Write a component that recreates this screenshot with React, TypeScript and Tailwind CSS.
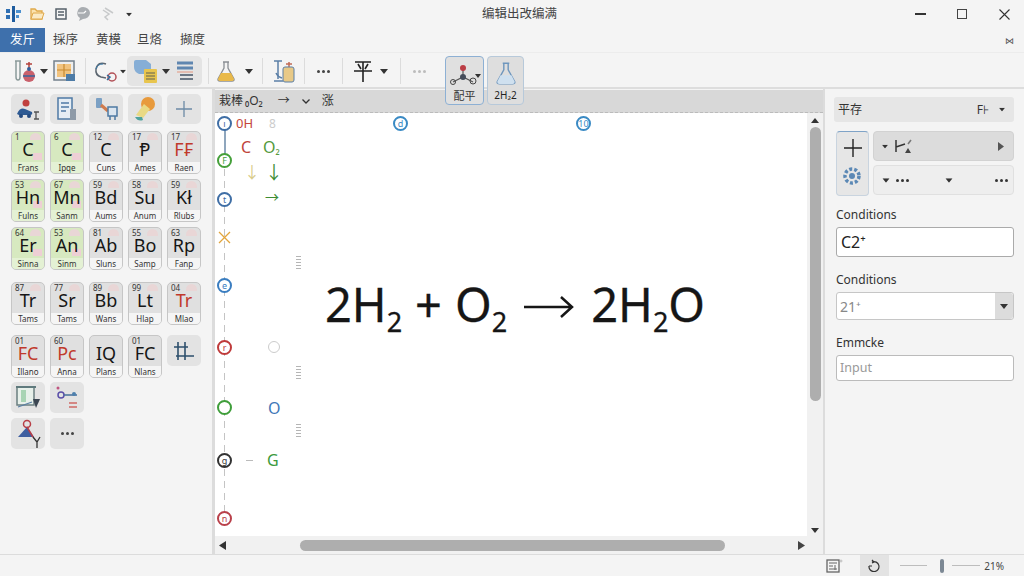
import React from "react";

const Caret = ({ c = "" }: { c?: string }) => (
  <svg width="8" height="5" viewBox="0 0 8 5" className={c}><path d="M0 0h8L4 5z" fill="#333" /></svg>
);
const Dots = ({ c = "bg-[#444]" }: { c?: string }) => (
  <span className="flex gap-[2px]">
    <i className={`block w-[3px] h-[3px] rounded-full ${c}`} />
    <i className={`block w-[3px] h-[3px] rounded-full ${c}`} />
    <i className={`block w-[3px] h-[3px] rounded-full ${c}`} />
  </span>
);
const Sep = ({ c = "" }: { c?: string }) => <span className={`block w-px h-[26px] bg-[#dcdcdc] ${c}`} />;

const Flask = ({ fill = "#e9b949", stroke = "#8a8f94", s = 22 }: { fill?: string; stroke?: string; s?: number }) => (
  <svg width={s} height={s} viewBox="0 0 22 22">
    <path d="M8 2h6M9 2v6L3 19q-.5 2 2 2h12q2.500 0 2-2L13 8V2" fill="none" stroke={stroke} strokeWidth="1.300" />
    <path d="M6 13h10l3 6q0 2-2 2H5q-2 0-2-2z" fill={fill} />
  </svg>
);

const TestTubes = () => (
  <svg width="24" height="24" viewBox="0 0 24 24">
    <path d="M2 2h6M3 2v16q0 3 2 3t2-3V2" fill="none" stroke="#8b9a9a" strokeWidth="1.500" />
    <path d="M16 3v8" stroke="#b3423d" strokeWidth="1.500" />
    <path d="M13 5h6" stroke="#b3423d" strokeWidth="1.500" />
    <circle cx="16" cy="17" r="6" fill="#c9606b" />
    <path d="M10 17h12" stroke="#35659b" strokeWidth="1.500" />
    <circle cx="16" cy="10" r="2" fill="#34609a" />
  </svg>
);
const Board = () => (
  <svg width="23" height="22" viewBox="0 0 23 22">
    <rect x="1" y="1" width="20" height="19" fill="#eee" stroke="#73808c" strokeWidth="1.500" />
    <rect x="4" y="4" width="14" height="13" fill="#f1c37f" />
    <path d="M11 4v13M4 10h14" stroke="#c98a2f" strokeWidth="1.200" />
    <rect x="13" y="14" width="9" height="7" fill="#4d7ba6" />
  </svg>
);
const Loop = () => (
  <svg width="24" height="22" viewBox="0 0 24 22">
    <path d="M12 4Q4 1 2 9q-1 6 5 8l5 1" fill="none" stroke="#5c6670" strokeWidth="1.500" />
    <path d="M2 9q1-5 7-5" fill="none" stroke="#3c7cab" strokeWidth="1" />
    <circle cx="18" cy="17" r="4" fill="none" stroke="#b25158" strokeWidth="1.500" />
    <path d="M13 15l3 2-3 3" fill="none" stroke="#2f6b9c" strokeWidth="1.500" />
  </svg>
);
const Folders = () => (
  <svg width="26" height="26" viewBox="0 0 26 26">
    <path d="M1 4q0-2 2-2h10l5 4v10H6Q1 14 1 9z" fill="#86aed6" />
    <rect x="11" y="11" width="13" height="14" rx="1" fill="#e8c54e" />
    <path d="M13 15h9M13 18h9M13 21h9" stroke="#8d8351" strokeWidth="1.300" />
  </svg>
);
const Rows = () => (
  <svg width="17" height="20" viewBox="0 0 17 20">
    <path d="M0 2h16M0 7h16" stroke="#5f86b0" strokeWidth="3" />
    <path d="M0 11h16" stroke="#e5b0a0" strokeWidth="1.500" />
    <path d="M3 14h13M3 18h13" stroke="#6d7885" strokeWidth="2" />
  </svg>
);
const TubeBottle = () => (
  <svg width="21" height="24" viewBox="0 0 21 24">
    <path d="M0 2h8M4 2v18M0 22h9" stroke="#5b7fa6" strokeWidth="1.500" fill="none" />
    <path d="M2 14q2 4 6 5" stroke="#5b7fa6" strokeWidth="1.500" fill="none" />
    <path d="M15 3v5M12 5h6" stroke="#c16b55" strokeWidth="1.500" />
    <rect x="9" y="8" width="11" height="15" rx="2" fill="#e8c987" stroke="#5b7fa6" />
  </svg>
);
const Balance = () => (
  <svg width="20" height="23" viewBox="0 0 20 23">
    <path d="M2 2h16M5 4l3 5M15 4l-3 5M1 11h18M10 2v20" stroke="#222" strokeWidth="1.600" fill="none" />
  </svg>
);
const Molecule = () => (
  <svg width="32" height="24" viewBox="0 0 32 24">
    <path d="M4 19l10-5 10 5M14 4v10" stroke="#555" strokeWidth="1.200" fill="none" />
    <circle cx="14" cy="5" r="3" fill="#bb3d45" />
    <circle cx="14" cy="14" r="3" fill="#444c5a" />
    <circle cx="4" cy="19" r="2.500" fill="none" stroke="#444" />
    <circle cx="24" cy="18" r="3" fill="none" stroke="#444" />
    <path d="M26 11h6l-3 4z" fill="#333" />
  </svg>
);
const PersonKit = () => (
  <svg width="24" height="22" viewBox="0 0 24 22">
    <circle cx="10" cy="5" r="3.500" fill="#c0413f" />
    <path d="M1 16q3-7 8-5l7 3q1 3-2 3H3z" fill="#2e5a93" />
    <circle cx="5" cy="18" r="2" fill="#244a80" />
    <circle cx="13" cy="18" r="2" fill="#244a80" />
    <path d="M18 14h5M18 21h5M20 14v7" stroke="#555" strokeWidth="1.300" />
  </svg>
);
const DocKit = () => (
  <svg width="20" height="24" viewBox="0 0 20 24">
    <rect x="1" y="1" width="14" height="21" fill="#e5edf4" stroke="#4f7aa5" strokeWidth="1.500" />
    <path d="M4 6h8M4 10h8M4 14h5" stroke="#4f7aa5" strokeWidth="1.500" />
    <rect x="13" y="12" width="6" height="11" fill="#8e9aa7" />
  </svg>
);
const TubesKit = () => (
  <svg width="23" height="24" viewBox="0 0 23 24">
    <rect x="1" y="1" width="6" height="10" rx="1" fill="#7ba0c4" />
    <path d="M6 8l7 6" stroke="#d07b4d" strokeWidth="3" />
    <rect x="13" y="10" width="9" height="9" fill="#dbe5ef" stroke="#4e79a3" strokeWidth="1.500" />
    <path d="M15 19v4M20 19v4" stroke="#4e79a3" strokeWidth="1.500" />
  </svg>
);
const Brush = () => (
  <svg width="22" height="26" viewBox="0 0 22 26">
    <circle cx="14" cy="8" r="7" fill="#e89a3c" />
    <path d="M2 19l8-11 6 5-7 9z" fill="#e9d984" />
    <path d="M1 21q3 5 8 3l-1-3z" fill="#4fa39e" />
  </svg>
);
const Frame = () => (
  <svg width="27" height="26" viewBox="0 0 27 26">
    <rect x="2" y="2" width="17" height="18" fill="#e7f0ea" stroke="#6b7f80" strokeWidth="1.500" />
    <rect x="6" y="5" width="5" height="12" fill="#a8d4b4" />
    <path d="M1 2h20" stroke="#5f7a7d" strokeWidth="2" />
    <path d="M3 22l14-5" stroke="#5a7fa3" strokeWidth="1.300" />
    <path d="M18 14h7l-4 9z" fill="#3b4652" />
  </svg>
);
const KeyEq = () => (
  <svg width="24" height="24" viewBox="0 0 24 24">
    <circle cx="3" cy="2" r="1.500" fill="#c05680" />
    <circle cx="6" cy="9" r="3" fill="none" stroke="#5a4fa8" strokeWidth="1.500" />
    <path d="M9 9h13" stroke="#466f9a" strokeWidth="1.500" />
    <circle cx="19" cy="8" r="2" fill="#4d80ad" />
    <path d="M14 17h8M14 21h8" stroke="#cf6a66" strokeWidth="1.500" />
  </svg>
);
const PersonY = () => (
  <svg width="26" height="30" viewBox="0 0 26 30">
    <circle cx="12" cy="5" r="3.500" fill="none" stroke="#b83e46" strokeWidth="1.500" />
    <path d="M12 8L3 18h16z" fill="#3f5fa0" />
    <path d="M12 8l6 10" stroke="#b83e46" strokeWidth="1.500" />
    <path d="M18 18l4 5 3-5M22 23v6" fill="none" stroke="#333" strokeWidth="1.300" />
  </svg>
);

type Card = { n: string; s: string; l: string; green?: boolean; red?: boolean; plain?: boolean };
const rows: Card[][] = [
  [
    { n: "1", s: "C", l: "Frans", green: true },
    { n: "6", s: "C", l: "Ipqe", green: true },
    { n: "12", s: "C", l: "Cuns" },
    { n: "17", s: "Ᵽ", l: "Ames" },
    { n: "17", s: "F₣", l: "Raen", red: true },
  ],
  [
    { n: "53", s: "Hn", l: "Fulns", green: true },
    { n: "67", s: "Mn", l: "Sanm", green: true },
    { n: "59", s: "Bd", l: "Aums" },
    { n: "58", s: "Su", l: "Anum" },
    { n: "59", s: "Kł", l: "Rlubs" },
  ],
  [
    { n: "64", s: "Er", l: "Sinna", green: true },
    { n: "53", s: "An", l: "Sinm", green: true },
    { n: "81", s: "Ab", l: "Sluns" },
    { n: "55", s: "Bo", l: "Samp" },
    { n: "63", s: "Rp", l: "Fanp" },
  ],
];
const row4: Card[] = [
  { n: "87", s: "Tr", l: "Tams" },
  { n: "77", s: "Sr", l: "Tams" },
  { n: "89", s: "Bb", l: "Wans" },
  { n: "99", s: "Lt", l: "Hlap" },
  { n: "04", s: "Tr", l: "Mlao", red: true },
];
const row5: Card[] = [
  { n: "01", s: "FC", l: "Illano", red: true, plain: true },
  { n: "60", s: "Pc", l: "Anna", red: true, plain: true },
  { n: "", s: "IQ", l: "Plans", plain: true },
  { n: "01", s: "FC", l: "Nlans", plain: true },
];

const ElementCard = ({ c }: { c: Card }) => (
  <div
    className={`relative h-[43px] rounded-[5px] border border-[#c6c6c6] overflow-hidden flex flex-col ${
      c.green ? "bg-[#d7e9c0]" : "bg-[#e0e0e0]"
    }`}
  >
    {!c.plain && <span className="absolute right-[3px] top-px w-[11px] h-[7px] rounded-t-full bg-[#e9d6d6]" />}
    {c.green && <span className="absolute right-[2px] top-[21px] w-[9px] h-[7px] bg-[#eecfd5]" />}
    <span className="absolute left-[3px] top-px text-[8px] leading-[8px] text-[#333]">{c.n}</span>
    <span
      className={`relative h-[30px] pt-[9px] flex items-start justify-center text-[18px] leading-[16px] ${
        c.red ? "text-[#c0392b]" : "text-[#161616]"
      }`}
    >
      {c.s}
    </span>
    <span
      className={`h-[11px] flex items-center justify-center text-[8px] leading-none text-[#333] ${
        c.green ? "bg-[#e4f1d4]" : "bg-[#f5f5f5]"
      }`}
    >
      {c.l}
    </span>
  </div>
);
const Tile = ({ children, h = "h-[30px]" }: { children?: React.ReactNode; h?: string }) => (
  <div className={`${h} rounded-[5px] bg-[#e3e3e3] flex items-center justify-center`}>{children}</div>
);
const grid = "grid grid-cols-[repeat(5,34px)] gap-x-[5px]";

const Ring = ({ pos, color, t }: { pos: string; color: string; t: string }) => (
  <span
    className={`absolute ${pos} w-[15px] h-[15px] rounded-full border-2 bg-white flex items-center justify-center text-[9px] leading-none ${color}`}
  >
    {t}
  </span>
);
const Ticks = ({ pos }: { pos: string }) => (
  <span className={`absolute ${pos} w-[5px] h-[14px] bg-[repeating-linear-gradient(#b5b5b5_0_1px,transparent_1px_3px)]`} />
);
const Label = ({ pos, c, t, size = "text-[16px]" }: { pos: string; c: string; t: React.ReactNode; size?: string }) => (
  <span className={`absolute ${pos} ${c} ${size} leading-none`}>{t}</span>
);

export default function App() {
  return (
    <div className="w-[1024px] h-[576px] overflow-hidden flex flex-col bg-[#f4f4f4] text-[#333] font-['Noto_Sans','Noto_Sans_CJK_SC',sans-serif]">
      {/* title bar */}
      <div className="h-[28px] shrink-0 relative flex items-center pl-[6px]">
        <svg width="16" height="16" viewBox="0 0 16 16">
          <path d="M0 3h4v4H0zM0 9h4v4H0z" fill="#2f6fb3" />
          <path d="M6 0h3v16H6z" fill="#1f5c9e" />
          <path d="M10 4h5v3h-5zM10 9h3v3h-3z" fill="#4d91cf" />
        </svg>
        <svg className="ml-[8px]" width="15" height="14" viewBox="0 0 15 14">
          <path d="M1 12V2h4l2 2h5v8z" fill="#fbe3ae" stroke="#e0a94a" strokeWidth="1.300" />
          <path d="M3 6h11l-2 6H1z" fill="#fbeac4" stroke="#e0a94a" />
        </svg>
        <svg className="ml-[10px]" width="12" height="12" viewBox="0 0 12 12">
          <rect x="1" y="1" width="10" height="10" fill="none" stroke="#56606a" strokeWidth="1.500" />
          <path d="M3 4h6M3 7h6" stroke="#56606a" strokeWidth="1.300" />
        </svg>
        <svg className="ml-[9px]" width="15" height="14" viewBox="0 0 15 14">
          <path d="M7 0a7 6 0 110 12l-4 2 1-3A6 6 0 017 0z" fill="#a9adb1" />
          <path d="M2 6h6l2-2" stroke="#fff" strokeWidth="1.200" fill="none" />
        </svg>
        <svg className="ml-[11px]" width="12" height="14" viewBox="0 0 12 14">
          <path d="M1 3l6 4-4 3 3 3M3 1l8 5" stroke="#c7c9ca" strokeWidth="1.500" fill="none" />
        </svg>
        <Caret c="ml-[11px] scale-75" />
        <span className="absolute left-[482px] top-[5px] text-[12.500px] leading-[18px] text-[#444]">编辑出改编满</span>
        <div className="ml-auto flex items-center">
          <span className="block w-[11px] h-[1.500px] bg-[#333] mr-[31px]" />
          <span className="block w-[10px] h-[10px] border border-[#444] mr-[32px]" />
          <svg className="mr-[14px]" width="11" height="11" viewBox="0 0 11 11">
            <path d="M.500.500l10 10M10.500.500l-10 10" stroke="#333" strokeWidth="1.100" />
          </svg>
        </div>
      </div>
      {/* menu tabs */}
      <div className="h-[24px] shrink-0 flex items-center text-[12.500px] leading-none text-[#444]">
        <span className="w-[45px] h-[24px] bg-[#3e70ac] text-white flex items-center justify-center">发斤</span>
        <span className="ml-[8px]">採序</span>
        <span className="ml-[18px]">黄模</span>
        <span className="ml-[16px]">旦烙</span>
        <span className="ml-[18px]">撷度</span>
        <span className="ml-auto mr-[10px] text-[9px] text-[#555]">⋈</span>
      </div>
      {/* toolbar */}
      <div className="h-[37px] shrink-0 flex items-start pt-[3px] border-t border-[#ececec] border-b-2 border-b-[#dddddd] relative z-10">
        <div className="ml-[13px] h-[30px] flex items-center">
          <TestTubes />
          <Caret c="ml-[3px]" />
          <span className="ml-[5px]"><Board /></span>
          <Sep c="ml-[9px]" />
          <span className="ml-[8px]"><Loop /></span>
          <Caret c="ml-[1px] scale-75" />
        </div>
        <div className="h-[30px] w-[75px] rounded-[5px] bg-[#e4e4e4] flex items-center pl-[6px]">
          <Folders />
          <Caret c="ml-[3px]" />
          <span className="ml-[7px]"><Rows /></span>
        </div>
        <div className="h-[30px] flex items-center">
          <Sep c="ml-[6px]" />
          <span className="ml-[6px]"><Flask /></span>
          <Caret c="ml-[8px]" />
          <Sep c="ml-[9px]" />
          <span className="ml-[11px]"><TubeBottle /></span>
          <Sep c="ml-[9px]" />
          <span className="ml-[12px]"><Dots /></span>
          <Sep c="ml-[12px]" />
          <span className="ml-[10px]"><Balance /></span>
          <Caret c="ml-[7px]" />
          <Sep c="ml-[12px]" />
          <span className="ml-[12px]"><Dots c="bg-[#bcbcbc]" /></span>
        </div>
        <div className="ml-[19px] w-[39px] h-[49px] rounded-[4px] border border-[#8db0d4] bg-[#e0e0e0] flex flex-col items-center pt-[6px]">
          <Molecule />
          <span className="text-[11px] leading-[14px] mt-[2px] text-[#333]">配平</span>
        </div>
        <div className="ml-[3px] w-[37px] h-[49px] rounded-[4px] border border-[#b7c9da] bg-[#dedede] flex flex-col items-center pt-[4px]">
          <Flask fill="#cfe0ef" stroke="#6e96bd" s={24} />
          <span className="text-[10px] leading-[14px] mt-[3px] text-[#222]">2H₂2</span>
        </div>
      </div>

      {/* body */}
      <div className="flex-1 min-h-0 flex">
        {/* palette */}
        <div className="w-[212px] shrink-0 pl-[11px] pt-[5px] flex flex-col">
          <div className={grid}>
            <Tile><PersonKit /></Tile>
            <Tile><DocKit /></Tile>
            <Tile><TubesKit /></Tile>
            <Tile><Brush /></Tile>
            <Tile>
              <svg width="16" height="16" viewBox="0 0 16 16"><path d="M8 0v16M0 8h16" stroke="#6d8ba6" strokeWidth="1.300" /></svg>
            </Tile>
          </div>
          <div className={`${grid} gap-y-[5px] mt-[7px]`}>
            {rows.flat().map((c, i) => (
              <ElementCard key={i} c={c} />
            ))}
          </div>
          <div className={`${grid} mt-[12px]`}>
            {row4.map((c, i) => (
              <ElementCard key={i} c={c} />
            ))}
          </div>
          <div className={`${grid} mt-[10px] items-start`}>
            {row5.map((c, i) => (
              <ElementCard key={i} c={c} />
            ))}
            <Tile h="h-[31px]">
              <svg width="20" height="20" viewBox="0 0 20 20">
                <path d="M4 1v18M11 1v18M0 6h14M2 15h18" stroke="#2d4f6c" strokeWidth="1.600" />
              </svg>
            </Tile>
          </div>
          <div className={`${grid} mt-[4px] gap-y-[5px]`}>
            <Tile h="h-[31px]"><Frame /></Tile>
            <Tile h="h-[31px]"><KeyEq /></Tile>
            <span /><span /><span />
            <Tile h="h-[31px]"><PersonY /></Tile>
            <Tile h="h-[31px]"><Dots /></Tile>
          </div>
        </div>

        {/* canvas column */}
        <div className="w-[613px] shrink-0 flex flex-col border-l-[3px] border-l-[#dcdcdc] border-r-2 border-r-[#dcdcdc]">
          <div className="h-[23px] shrink-0 mt-[1px] bg-[#d8d8d8] flex items-center text-[12px] leading-none text-[#333] pl-[4px] border-b border-dashed border-b-[#bbbbbb]">
            <span>栽棒</span>
            <span className="ml-[2px] text-[12px]">₀O₂</span>
            <span className="ml-[15px]">→</span>
            <svg className="ml-[12px]" width="8" height="5" viewBox="0 0 8 5"><path d="M.500.500L4 4 7.500.500" fill="none" stroke="#333" strokeWidth="1.300" /></svg>
            <span className="ml-[12px]">涨</span>
          </div>
          <div className="flex-1 min-h-0 flex">
            <div className="flex-1 min-w-0 flex flex-col">
              {/* free canvas */}
              <div className="relative flex-1 min-h-0 bg-white flex items-center justify-center overflow-hidden">
                <span className="absolute left-[9px] top-[8px] bottom-[18px] w-px bg-[repeating-linear-gradient(#c4c4c4_0_7px,transparent_7px_12px)]" />
                <span className="absolute left-[9px] top-[12px] h-[36px] w-[2px] bg-[#8fa6bd]" />
                <Ring pos="left-[2px] top-[3px]" color="border-[#3f6ea5] text-[#3f6ea5]" t="ı" />
                <Ring pos="left-[2px] top-[40px]" color="border-[#45a03a] text-[#45a03a]" t="F" />
                <Ring pos="left-[2px] top-[79px]" color="border-[#3f6ea5] text-[#3f6ea5]" t="t" />
                <svg className="absolute left-[3px] top-[118px]" width="13" height="13" viewBox="0 0 13 13">
                  <path d="M1 1l11 11M12 1L1 12" stroke="#e2a53c" strokeWidth="1.300" />
                </svg>
                <Ring pos="left-[2px] top-[165px]" color="border-[#3a7dc0] text-[#3a7dc0]" t="e" />
                <Ring pos="left-[2px] top-[227px]" color="border-[#bf3a3a] text-[#bf3a3a]" t="r" />
                <Ring pos="left-[2px] top-[287px]" color="border-[#3f9e3a] text-[#3f9e3a]" t="" />
                <Ring pos="left-[2px] top-[340px]" color="border-[#333] text-[#333]" t="g" />
                <Ring pos="left-[2px] top-[398px]" color="border-[#b9404a] text-[#b9404a]" t="n" />
                <Ring pos="left-[178px] top-[3px]" color="border-[#3a8ac4] text-[#3a8ac4]" t="d" />
                <Ring pos="left-[361px] top-[3px]" color="border-[#3a8ac4] text-[#3a8ac4]" t="10" />
                <Label pos="left-[21px] top-[4px]" c="text-[#c4473c]" t="0H" size="text-[13px]" />
                <Label pos="left-[54px] top-[5px]" c="text-[#cccccc]" t="8" size="text-[12px]" />
                <Label pos="left-[26px] top-[26px]" c="text-[#c0443c]" t="C" />
                <Label pos="left-[48px] top-[26px]" c="text-[#549a3c]" t={<>O<span className="text-[12px]">₂</span></>} />
                <Label pos="left-[29px] top-[51px]" c="text-[#d9cc8a]" t="↓" />
                <Label pos="left-[50px] top-[50px]" c="text-[#3d8c33]" t="↓" size="text-[18px]" />
                <Label pos="left-[50px] top-[77px]" c="text-[#3d8c33]" t="→" size="text-[14px]" />
                <Ticks pos="left-[81px] top-[143px]" />
                <Ticks pos="left-[81px] top-[253px]" />
                <Ticks pos="left-[81px] top-[311px]" />
                <span className="absolute left-[53px] top-[228px] w-[12px] h-[12px] rounded-full border-[1.500px] border-[#cccccc]" />
                <Label pos="left-[53px] top-[287px]" c="text-[#3f78b8]" t="O" />
                <Label pos="left-[52px] top-[339px]" c="text-[#3c9a3c]" t="G" />
                <span className="absolute left-[31px] top-[347px] w-[7px] h-px bg-[#bbbbbb]" />
                <div className="relative top-[-20px] left-[4px] text-[47px] leading-none text-[#161616] [-webkit-text-stroke:0.3px_#161616] whitespace-nowrap flex items-baseline">
                  2H<span className="text-[27px] leading-none relative top-[10px]">2</span>
                  <span className="ml-[13px]">+</span>
                  <span className="ml-[13px]">O</span><span className="text-[27px] leading-none relative top-[10px]">2</span>
                  <svg className="mx-[17px] self-center relative top-[2px]" width="50" height="24" viewBox="0 0 50 24">
                    <path d="M0 12h48M37 2l11 10-11 10" fill="none" stroke="#161616" strokeWidth="2.500" />
                  </svg>
                  2H<span className="text-[27px] leading-none relative top-[10px]">2</span>O
                </div>
              </div>
              {/* horizontal scrollbar */}
              <div className="h-[18px] shrink-0 bg-[#f1f1f1] flex items-center pl-[4px] pr-[2px]">
                <svg width="7" height="9" viewBox="0 0 7 9"><path d="M7 0v9L0 4.500z" fill="#333" /></svg>
                <span className="ml-[74px] w-[425px] h-[11px] rounded-full bg-[#aeaeae]" />
                <svg className="ml-auto" width="7" height="9" viewBox="0 0 7 9"><path d="M0 0v9l7-4.500z" fill="#444" /></svg>
              </div>
            </div>
            {/* vertical scrollbar */}
            <div className="w-[16px] shrink-0 bg-[#f1f1f1] flex flex-col items-center pt-[5px] pb-[21px]">
              <Caret c="rotate-180" />
              <span className="mt-[4px] w-[11px] h-[274px] rounded-full bg-[#aeaeae]" />
              <Caret c="mt-auto" />
            </div>
          </div>
        </div>

        {/* right panel */}
        <div className="flex-1 min-w-0 pl-[9px] pr-[10px] pt-[8px] flex flex-col">
          <div className="h-[25px] rounded-[3px] bg-[#e6e6e6] flex items-center pl-[4px] pr-[8px] text-[12px] text-[#333]">
            <span>平存</span>
            <span className="ml-auto">F⊦</span>
            <Caret c="ml-[9px] scale-75" />
          </div>
          <div className="mt-[9px] flex gap-[4px] pl-[2px]">
            <div className="w-[33px] h-[65px] rounded-[4px] border border-[#c9d4df] border-t-[#7fa3c7] bg-[#e6e6e6] flex flex-col items-center pt-[7px]">
              <svg width="18" height="18" viewBox="0 0 18 18"><path d="M9 0v18M0 9h18" stroke="#222" strokeWidth="1.400" /></svg>
              <svg className="mt-[9px]" width="21" height="21" viewBox="0 0 21 21">
                <circle cx="10" cy="10" r="7" fill="none" stroke="#5b88b5" strokeWidth="3.500" strokeDasharray="3 2" />
                <circle cx="10" cy="10" r="3" fill="#5b88b5" />
              </svg>
            </div>
            <div className="flex-1 min-w-0 flex flex-col gap-[4px]">
              <div className="h-[30px] rounded-[4px] bg-[#dcdcdc] border border-[#d2d2d2] flex items-center pl-[7px] pr-[9px]">
                <Caret c="scale-75" />
                <svg className="ml-[5px]" width="20" height="16" viewBox="0 0 20 16">
                  <path d="M2 2v12M2 9l9-3" stroke="#333" strokeWidth="1.500" fill="none" />
                  <path d="M11 15l3-5 3 5z" fill="#444" />
                  <path d="M14 6l3-4" stroke="#777" strokeWidth="1.500" />
                </svg>
                <svg className="ml-auto" width="6" height="9" viewBox="0 0 6 9"><path d="M0 0v9l6-4.500z" fill="#555" /></svg>
              </div>
              <div className="h-[30px] rounded-[4px] bg-[#eeeeee] border border-[#e0e0e0] flex items-center pl-[8px] pr-[5px]">
                <Caret c="scale-90" />
                <span className="ml-[6px]"><Dots c="bg-[#333]" /></span>
                <Caret c="ml-[36px] scale-90" />
                <span className="ml-auto"><Dots c="bg-[#333]" /></span>
              </div>
            </div>
          </div>
          <label className="mt-[10px] pl-[2px] text-[12px] leading-[18px] text-[#333]">Conditions</label>
          <div className="ml-[2px] mt-[3px] h-[30px] rounded-[3px] border border-[#aaaaaa] bg-white flex items-center pl-[4px] text-[16px] text-[#222]">
            C2⁺
          </div>
          <label className="mt-[14px] pl-[2px] text-[12px] leading-[18px] text-[#333]">Conditions</label>
          <div className="ml-[2px] mt-[3px] h-[28px] rounded-[3px] border border-[#c6c6c6] bg-white flex items-center text-[14px] text-[#888]">
            <span className="pl-[3px]">21⁺</span>
            <span className="ml-auto w-[18px] h-full bg-[#dcdcdc] flex items-center justify-center rounded-r-[3px]"><Caret /></span>
          </div>
          <label className="mt-[14px] pl-[2px] text-[12px] leading-[18px] text-[#333]">Emmcke</label>
          <div className="ml-[2px] mt-[3px] h-[26px] rounded-[3px] border border-[#bbbbbb] bg-white flex items-center pl-[3px] text-[12.500px] text-[#999]">
            Input
          </div>
        </div>
      </div>

      {/* status bar */}
      <div className="h-[22px] shrink-0 border-t border-[#dcdcdc] flex items-center justify-end pr-[20px] text-[10px] text-[#444]">
        <svg width="17" height="14" viewBox="0 0 17 14">
          <rect x="1" y="1" width="12" height="12" fill="none" stroke="#666" strokeWidth="1.300" />
          <path d="M3 4h8M3 7h4M3 10h8M9 6v5" stroke="#666" />
          <circle cx="15" cy="2" r="1" fill="none" stroke="#aaa" strokeWidth=".7" />
        </svg>
        <span className="ml-[17px] w-[29px] h-[21px] bg-[#e3e3e3] flex items-center justify-center">
          <svg width="13" height="13" viewBox="0 0 13 13">
            <path d="M4 3a5 5 0 11-3 4M1 7h3M4 1l2 2-2 1" fill="none" stroke="#333" strokeWidth="1.200" />
          </svg>
        </span>
        <span className="ml-[11px] w-[27px] h-px bg-[#bdbdbd]" />
        <span className="ml-[13px] w-[4px] h-[14px] rounded-full bg-[#7c8894]" />
        <span className="ml-[8px] w-[28px] h-px bg-[#bdbdbd]" />
        <span className="ml-[4px] leading-none">21%</span>
      </div>
    </div>
  );
}
